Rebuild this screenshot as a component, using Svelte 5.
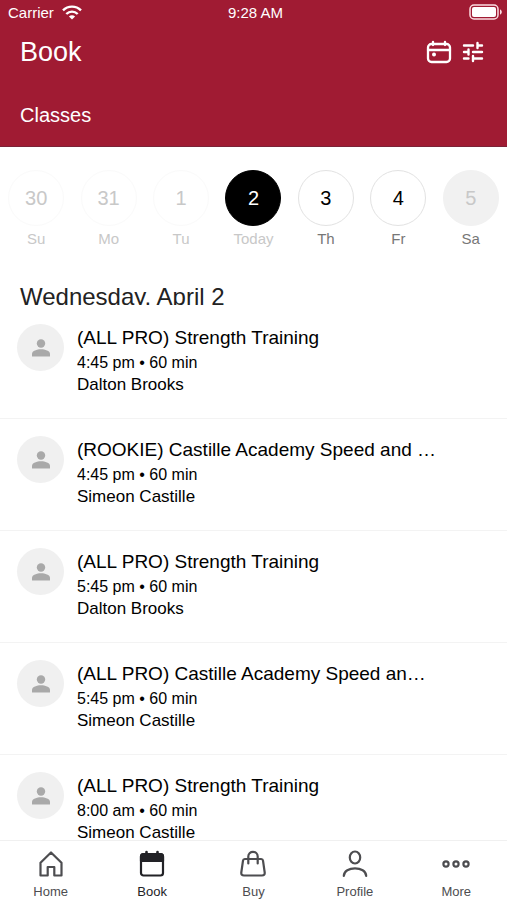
<script lang="ts">
	type Day = { date: number; label: string; state: string };

	const days: Day[] = [
		{ date: 30, label: 'Su', state: 'past' },
		{ date: 31, label: 'Mo', state: 'past' },
		{ date: 1, label: 'Tu', state: 'past' },
		{ date: 2, label: 'Today', state: 'selected' },
		{ date: 3, label: 'Th', state: 'open' },
		{ date: 4, label: 'Fr', state: 'open' },
		{ date: 5, label: 'Sa', state: 'closed' }
	];

	const classes = [
		{ title: '(ALL PRO) Strength Training', time: '4:45 pm', coach: 'Dalton Brooks' },
		{ title: '(ROOKIE) Castille Academy Speed and …', time: '4:45 pm', coach: 'Simeon Castille' },
		{ title: '(ALL PRO) Strength Training', time: '5:45 pm', coach: 'Dalton Brooks' },
		{ title: '(ALL PRO) Castille Academy Speed an…', time: '5:45 pm', coach: 'Simeon Castille' },
		{ title: '(ALL PRO) Strength Training', time: '8:00 am', coach: 'Simeon Castille' }
	];

	const tabs = ['Home', 'Book', 'Buy', 'Profile', 'More'];

	let selected = $state(2);
	let activeTab = $state('Book');
</script>

<div class="screen">
	<header>
		<div class="status">
			<div class="carrier">
				<span>Carrier</span>
				<svg width="20" height="15" viewBox="0 0 20 15" fill="none" stroke="#fff" stroke-width="2.4">
					<path d="M1 5.4C6 .3 14 .3 19 5.4" />
					<path d="M4.3 9C7.6 5.8 12.4 5.8 15.7 9" />
					<path d="M10 14.6 6.9 11.5C8.7 9.9 11.3 9.9 13.1 11.5Z" fill="#fff" stroke="none" />
				</svg>
			</div>
			<span>9:28 AM</span>
			<div class="battery">
				<svg width="34" height="16" viewBox="0 0 34 16">
					<rect x="1" y="1" width="28" height="14" rx="4" fill="none" stroke="#fbdde2" stroke-width="1.5" />
					<rect x="3" y="3" width="24" height="10" rx="2" fill="#fff" />
					<path d="M31 5.5C33.4 6 33.4 10 31 10.5Z" fill="#fbdde2" />
				</svg>
			</div>
		</div>
		<div class="title-bar">
			<h1>Book</h1>
			<div class="actions">
				<button aria-label="Calendar">
					<svg width="26" height="24" viewBox="0 0 26 24" fill="none" stroke="#fff" stroke-width="2.3" stroke-linecap="round">
						<rect x="2" y="4" width="22" height="18" rx="3.5" />
						<path d="M2 10H24M7 1.8V5M19 1.8V5" />
						<circle cx="8" cy="14.5" r="2" fill="#fff" stroke="none" />
					</svg>
				</button>
				<button aria-label="Filters">
					<svg width="22" height="22" viewBox="0 0 22 22" fill="none" stroke="#fff" stroke-width="2.4" stroke-linecap="round">
						<path d="M2 4.5H11M15.5 4.5H20M15.5 2V7" />
						<path d="M2 11H6.500M6.500 8.500V13.500M11 11H20" />
						<path d="M2 17.500H6.500M11 17.500H20M11 15V20" />
					</svg>
				</button>
			</div>
		</div>
		<h2>Classes</h2>
	</header>

	<div class="week">
		{#each days as day}
			<button
				class="day {day.state}"
				disabled={day.state === 'past' || day.state === 'closed'}
				aria-pressed={selected === day.date}
				onclick={() => (selected = day.date)}
			>
				<span class="circle">{day.date}</span>
				<span class="name">{day.label}</span>
			</button>
		{/each}
	</div>

	<main>
		<h3>Wednesday, April 2</h3>
		<ul>
			{#each classes as item}
				<li>
					<div class="avatar">
						<svg width="18" height="18" viewBox="0 0 18 18" fill="#a9a9a9">
							<circle cx="9" cy="4.5" r="4.2" />
							<path d="M0 17V14.8C0 11.9 5 10.3 9 10.3S18 11.9 18 14.8V17Q18 17.5 17.5 17.5H.5Q0 17.5 0 17Z" />
						</svg>
					</div>
					<div class="info">
						<h4>{item.title}</h4>
						<p class="time">{item.time} • 60 min</p>
						<p class="coach">{item.coach}</p>
					</div>
				</li>
			{/each}
		</ul>
	</main>

	<nav>
		{#each tabs as tab}
			<button class:active={activeTab === tab} onclick={() => (activeTab = tab)}>
				<svg width="28" height="28" viewBox="0 0 28 28" fill="none" stroke="currentColor" stroke-width="2.2" stroke-linejoin="round" stroke-linecap="round">
					{#if tab === 'Home'}
						<path d="M3.5 12.8 14 2.5 24.5 12.8V25.5H17.3V17H10.7V25.5H3.5Z" />
					{:else if tab === 'Book'}
						<rect x="3" y="4" width="22" height="21.5" rx="2.5" />
						<path d="M3 11V6.5Q3 4 5.5 4H22.5Q25 4 25 6.5V11Z" fill="currentColor" />
						<path d="M8.5 2V5M19.5 2V5" stroke-width="2.6" />
					{:else if tab === 'Buy'}
						<path d="M5.8 9H22.2Q23.8 9 24 10.6L25.7 22.5Q26 25.5 23 25.5H5Q2 25.5 2.3 22.5L4 10.6Q4.2 9 5.8 9Z" />
						<path d="M9.3 13.5V6.5C9.3 .2 18.7 .2 18.7 6.5V13.5" />
					{:else if tab === 'Profile'}
						<ellipse cx="14" cy="7.5" rx="5.2" ry="6" />
						<path d="M2.8 26C2.8 15.8 25.2 15.8 25.2 26" />
					{:else}
						<circle cx="4" cy="14" r="2.6" />
						<circle cx="14" cy="14" r="2.6" />
						<circle cx="24" cy="14" r="2.6" />
					{/if}
				</svg>
				<span>{tab}</span>
			</button>
		{/each}
	</nav>
</div>

<style>
	:global(body) {
		margin: 0;
	}
	.screen {
		display: flex;
		flex-direction: column;
		height: 100vh;
		background: #fff;
		color: #000;
		font-family: 'Liberation Sans', Arial, sans-serif;
	}
	h1,
	h2,
	h3,
	h4,
	p,
	ul {
		margin: 0;
		padding: 0;
		font-weight: 400;
	}
	button {
		border: 0;
		padding: 0;
		background: none;
		font: inherit;
		color: inherit;
	}
	svg {
		display: block;
	}
	header {
		background: #a01b33;
		color: #fff;
		padding-bottom: 19px;
		border-bottom: 1px solid #7b2338;
	}
	.status {
		display: grid;
		grid-template-columns: 1fr auto 1fr;
		align-items: center;
		height: 24px;
		padding: 0 4px 0 8px;
		font-size: 15px;
	}
	.carrier {
		display: flex;
		align-items: center;
		gap: 8px;
	}
	.battery {
		justify-self: end;
	}
	.title-bar {
		display: flex;
		justify-content: space-between;
		align-items: center;
		height: 56px;
		padding: 0 23px 0 20px;
	}
	h1 {
		font-size: 27px;
	}
	.actions {
		display: flex;
		align-items: center;
		gap: 10px;
	}
	h2 {
		padding: 23px 20px 0;
		font-size: 20px;
		line-height: 24px;
	}
	.week {
		display: grid;
		grid-template-columns: repeat(7, 1fr);
		padding: 23px 0 24px;
	}
	.day {
		display: flex;
		flex-direction: column;
		align-items: center;
		gap: 4px;
		color: #777;
	}
	.circle {
		display: flex;
		align-items: center;
		justify-content: center;
		box-sizing: border-box;
		width: 56px;
		height: 56px;
		border: 1px solid #e2e2e2;
		border-radius: 50%;
		color: #000;
		font-size: 20px;
	}
	.name {
		font-size: 15px;
		line-height: 18px;
	}
	.past,
	.selected {
		color: #c8c8c8;
	}
	.past .circle {
		border-color: #fafafa;
		color: #c8c8c8;
	}
	.selected .circle {
		border-color: #000;
		background: #000;
		color: #fff;
	}
	.closed .circle {
		border-color: #f1f1f1;
		background: #f1f1f1;
		color: #c8c8c8;
	}
	main {
		flex: 1;
		min-height: 0;
		overflow: hidden;
	}
	h3 {
		height: 33px;
		padding: 0 20px;
		overflow: hidden;
		color: #222;
		font-size: 24px;
		line-height: 49px;
	}
	ul {
		padding-top: 2px;
		list-style: none;
	}
	li {
		display: flex;
		gap: 13px;
		box-sizing: border-box;
		height: 112px;
		padding: 17px 17px 0;
		border-bottom: 1px solid #f3f3f3;
	}
	.avatar {
		display: flex;
		align-items: center;
		justify-content: center;
		flex: none;
		width: 47px;
		height: 47px;
		border-radius: 50%;
		background: #f0f0f0;
	}
	.info {
		white-space: nowrap;
	}
	h4 {
		font-size: 19px;
		line-height: 28px;
	}
	.info p {
		line-height: 22px;
	}
	.time {
		font-size: 16px;
	}
	.coach {
		font-size: 17px;
	}
	nav {
		display: grid;
		grid-template-columns: repeat(5, 1fr);
		height: 60px;
		box-sizing: border-box;
		padding-top: 9px;
		border-top: 1px solid #f0f0f0;
		background: #fff;
		color: #4d4d50;
	}
	nav button {
		display: flex;
		flex-direction: column;
		align-items: center;
		gap: 6px;
		font-size: 13px;
		line-height: 16px;
	}
	.active {
		color: #222226;
	}
</style>
